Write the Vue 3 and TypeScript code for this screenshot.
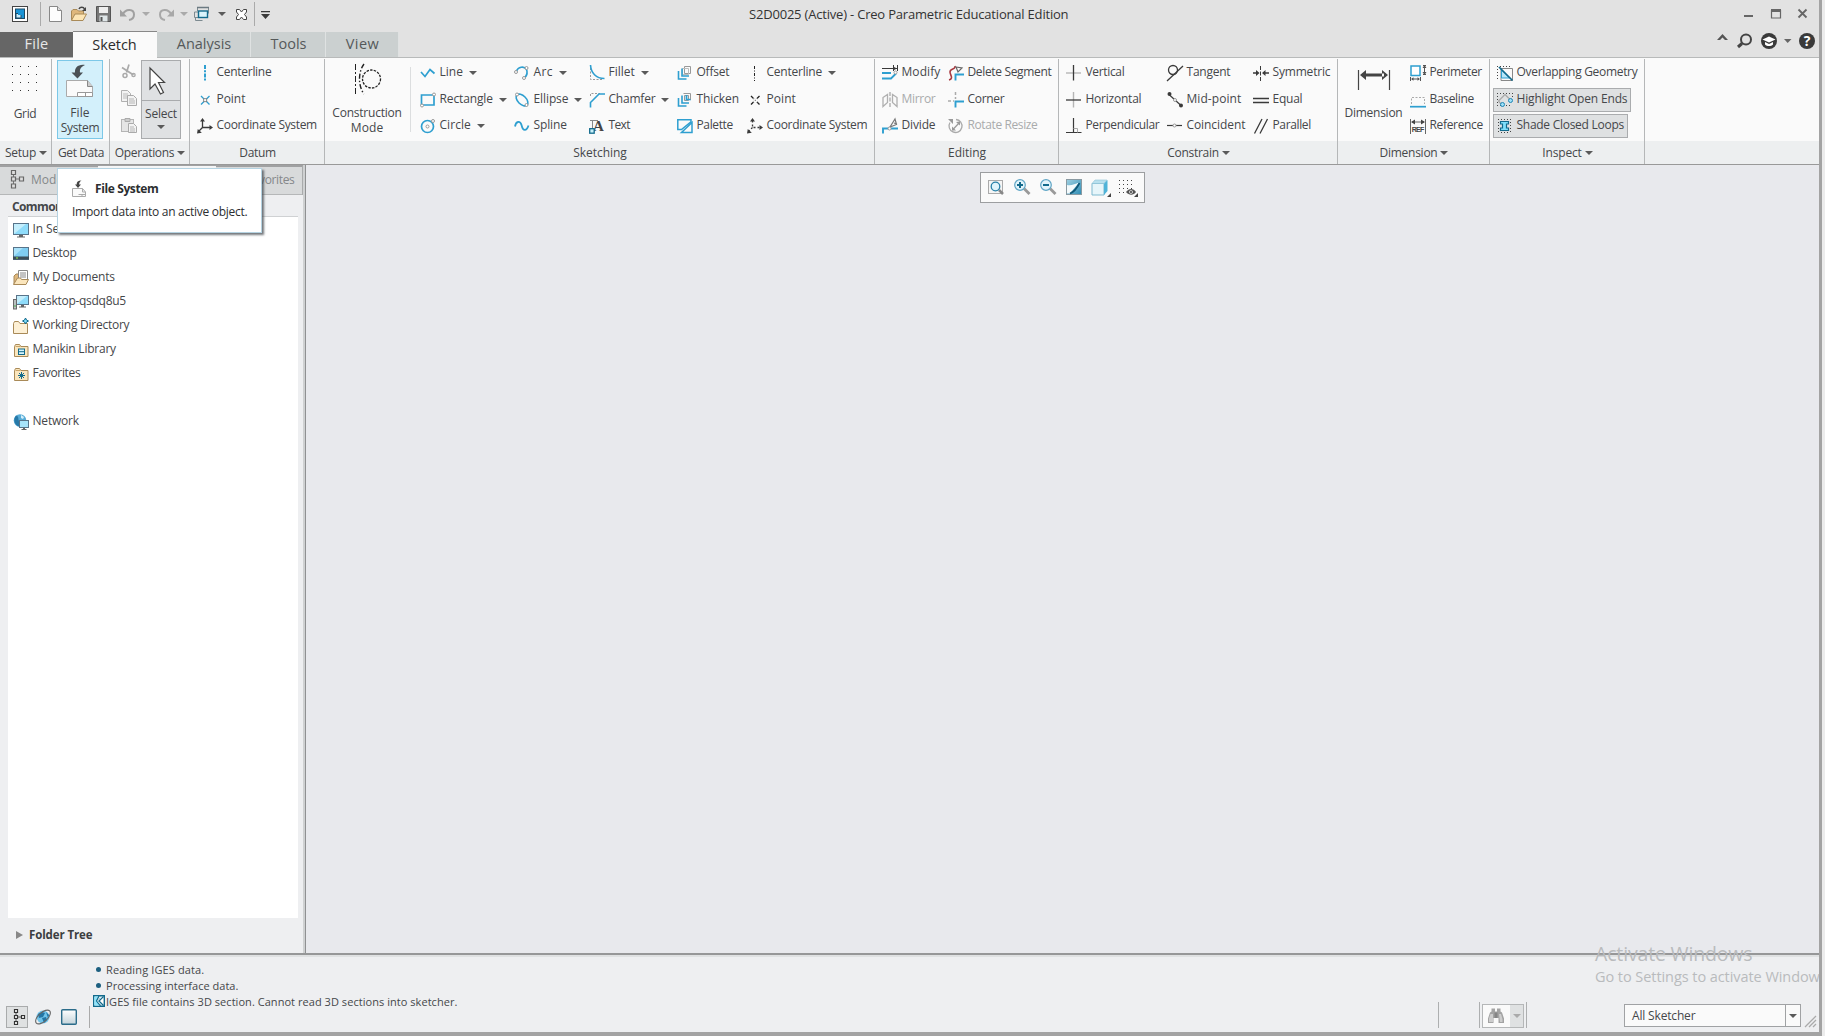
<script setup lang="ts">
interface Cmd {
  icon: string
  label: string
  w: number
  arrow?: boolean
  off?: boolean
  on?: boolean
}
interface Col { width: number; items: Cmd[] }
interface Group { name: string; w: number; width: number; arrow?: boolean; pad?: number; big?: string; cols?: Col[] }

// Spreads the letters of a label so that it fills the given width.
const vFit = {
  mounted(el: HTMLElement, binding: { value: number }) {
    const n = (el.textContent ?? '').length
    const natural = el.getBoundingClientRect().width
    if (n > 0) el.style.letterSpacing = ((binding.value + 1.4 - natural) / n).toFixed(3) + 'px'
  },
}

const c = (icon: string, label: string, w: number, extra: Partial<Cmd> = {}): Cmd => ({ icon, label, w, ...extra })

const tabs = [
  { label: 'File', w: 22.5, width: 73, cls: 'file' },
  { label: 'Sketch', w: 43, width: 84, cls: 'active' },
  { label: 'Analysis', w: 53, width: 94, cls: '' },
  { label: 'Tools', w: 34.5, width: 75, cls: '' },
  { label: 'View', w: 32, width: 73, cls: '' },
]

const groups: Group[] = [
  { name: 'Setup', w: 29.5, width: 52, arrow: true, big: 'grid' },
  { name: 'Get Data', w: 44.5, width: 58, big: 'filesystem' },
  { name: 'Operations', w: 58, width: 80, arrow: true, big: 'ops' },
  {
    name: 'Datum', w: 35, width: 135, pad: 7,
    cols: [{ width: 127, items: [c('clBlue', 'Centerline', 53.5), c('ptBlue', 'Point', 27.5), c('csys', 'Coordinate System', 99)] }],
  },
  {
    name: 'Sketching', w: 52, width: 550, big: 'construction',
    cols: [
      { width: 94, items: [c('line', 'Line', 22, { arrow: true }), c('rect', 'Rectangle', 52, { arrow: true }), c('circle', 'Circle', 30, { arrow: true })] },
      { width: 75, items: [c('arc', 'Arc', 18, { arrow: true }), c('ellipse', 'Ellipse', 33.5, { arrow: true }), c('spline', 'Spline', 32)] },
      { width: 88, items: [c('fillet', 'Fillet', 25, { arrow: true }), c('chamfer', 'Chamfer', 45.5, { arrow: true }), c('text', 'Text', 20)] },
      { width: 70, items: [c('offset', 'Offset', 31.5), c('thicken', 'Thicken', 41), c('palette', 'Palette', 35)] },
      { width: 126, items: [c('clBlack', 'Centerline', 54, { arrow: true }), c('ptBlack', 'Point', 28), c('csysDash', 'Coordinate System', 99.5)] },
    ],
  },
  {
    name: 'Editing', w: 36.5, width: 184, pad: 7,
    cols: [
      { width: 66, items: [c('modify', 'Modify', 37.5), c('mirror', 'Mirror', 32.5, { off: true }), c('divide', 'Divide', 32.5)] },
      { width: 110, items: [c('delseg', 'Delete Segment', 82.5), c('corner', 'Corner', 35.5), c('rotate', 'Rotate Resize', 68.5, { off: true })] },
    ],
  },
  {
    name: 'Constrain', w: 50, width: 279, arrow: true, pad: 7,
    cols: [
      { width: 101, items: [c('vertical', 'Vertical', 37.5), c('horizontal', 'Horizontal', 54.5), c('perp', 'Perpendicular', 72.5)] },
      { width: 86, items: [c('tangent', 'Tangent', 42.5), c('midpoint', 'Mid-point', 53.5), c('coincident', 'Coincident', 57.5)] },
      { width: 84, items: [c('symmetric', 'Symmetric', 56.5), c('equal', 'Equal', 28.5), c('parallel', 'Parallel', 37)] },
    ],
  },
  {
    name: 'Dimension', w: 56.5, width: 152, arrow: true, big: 'dimension',
    cols: [{ width: 79, items: [c('perimeter', 'Perimeter', 51), c('baseline', 'Baseline', 43), c('reference', 'Reference', 52)] }],
  },
  {
    name: 'Inspect', w: 38, width: 155, arrow: true, pad: 7,
    cols: [{ width: 147, items: [c('overlap', 'Overlapping Geometry', 119.5), c('openends', 'Highlight Open Ends', 109.5, { on: true }), c('loops', 'Shade Closed Loops', 106, { on: true })] }],
  },
]

const folders = [
  { icon: 'monitor', label: 'In Session', w: 54 },
  { icon: 'desktop', label: 'Desktop', w: 42.5 },
  { icon: 'docs', label: 'My Documents', w: 81 },
  { icon: 'pc', label: 'desktop-qsdq8u5', w: 92 },
  { icon: 'workdir', label: 'Working Directory', w: 95.5 },
  { icon: 'manikin', label: 'Manikin Library', w: 82 },
  { icon: 'fav', label: 'Favorites', w: 46.5 },
  { icon: '', label: '', w: 0 },
  { icon: 'network', label: 'Network', w: 45 },
]

function dots(x0: number, y0: number, cols: number, rows: number, step: number, size = 1, fill = '#444'): string {
  let out = ''
  for (let r = 0; r < rows; r++)
    for (let k = 0; k < cols; k++) out += `<rect x="${x0 + k * step}" y="${y0 + r * step}" width="${size}" height="${size}" fill="${fill}"/>`
  return out
}

const B = '#2e9fd0'
const K = '#3a3a3a'
const s = (d: string, color: string, w = 1, extra = '') => `<path d="${d}" fill="none" stroke="${color}" stroke-width="${w}" ${extra}/>`
const node = (x: number, y: number, color = '#999') => `<circle cx="${x}" cy="${y}" r="1.5" fill="#fff" stroke="${color}" stroke-width="1"/>`
const fold = '<path d="M1.5 14.5V4.5l1-2h4l1.500 2h7v10z" fill="#fbe6bd" stroke="#a98a58"/><path d="M2.500 4.500h5" stroke="#c9a56a"/>'
const csysBody = (dash: string) => s('M5.500 2.500V9.500H13.500M5.500 9.500L1.500 13.500', K, 1.3, dash) +
  `<path d="M5.500 0L8 3.500H3z M16 9.500L12.500 7V12z M0 15.500L.8 11L4.800 14.800z" fill="${K}"/>`
const frameDots = dots(0, 1, 5, 1, 3) + dots(0, 4, 1, 4, 3)

const icons: Record<string, string> = {
  clBlue: s('M8 0V16', B, 2, 'stroke-dasharray="4 1.200 2 1.200"'),
  clBlack: s('M7.500 1V16', '#222', 1, 'stroke-dasharray="3 1.500 1 1.500"'),
  ptBlue: s('M4 4l8.500 8.500M12.500 4L4 12.500', B, 1.3) + '<rect x="6.700" y="6.700" width="3" height="3" fill="#fafafa" stroke="#777" stroke-width=".8"/>',
  ptBlack: s('M4 4l8.500 8.500M12.500 4L4 12.500', '#222', 1.3) + '<rect x="6.300" y="6.300" width="4" height="4" fill="#fafafa"/><rect x="7.800" y="7.800" width="1" height="1" fill="#555"/>',
  csys: csysBody(''),
  csysDash: csysBody('stroke-dasharray="2 2"'),
  line: s('M1 7l4 4.500L10 4.500l4.500 4', B, 1.7),
  rect: s('M1.500 3h12.500v10H1.500z', B, 1.7) + node(14, 2.500) + node(2, 13.500),
  circle: `<circle cx="7.500" cy="8.500" r="6" fill="none" stroke="${B}" stroke-width="1.700"/>` + node(7.5, 8.5) + node(13, 3),
  arc: s('M2.500 6C4 2 10 .500 12.500 4.500C14 8 13 10 11 12.500', B, 1.7) + node(2, 7) + node(10, 13) + node(12.500, 3),
  ellipse: `<ellipse cx="8" cy="8" rx="7.200" ry="4.200" transform="rotate(45 8 8)" fill="none" stroke="${B}" stroke-width="1.600"/>` + node(3, 2.500) + node(12.500, 13),
  spline: s('M1 8.500C2 3 6 2.500 7.500 7C9 13.500 12.500 13.500 14.500 7.500', B, 1.8),
  fillet: s('M1.500 3v11.500h13', '#999', 1, 'stroke-dasharray="2 1.500"') + s('M1.500 0C2 8 7 13.500 15.500 13.500', B, 1.6),
  chamfer: s('M1.500 4V1.500H11', '#999', 1, 'stroke-dasharray="2 1.500"') + s('M1.500 15.500V10.500L10 2h6', B, 1.6),
  text: '<text x="4" y="13" font-family="Liberation Serif" font-weight="bold" font-size="15" fill="#444">A</text>' + s('M1 2.500h8M3.500 2.500v9', '#888') + '<rect x=".7" y="10.700" width="4.500" height="4.500" fill="#c8f0fa" stroke="#126a8c" stroke-width="1.300"/>',
  offset: s('M7.500 1.500h6v7h-6z', '#999') + s('M5.500 3.500h6v6h-6z', '#bbb') + s('M5 3.500v7.500h7M1.500 6v8h8', B, 1.6),
  thicken: '<path d="M7.500 3.500h4v5h-4z" fill="#dff3fb" stroke="#999"/>' + s('M5 3.500v7.500h7M1.500 6v8h8M9.500 3v4.500h4.500', B, 1.6) + s('M6.500 1.500h7v6', '#999', 1),
  palette: s('M.800 1.800h13.200v2L4.500 11.500H.800z', B, 1.5) + s('M15 4.500v10H4.500z', B, 1.5),
  modify: s('M0 3.500h15M11.500 0v6M15.500 0v6', K, 1) + `<path d="M15 3.500l-4-2v4z" fill="${K}"/>` + s('M0 8h9M0 13.500h9l5-5', B, 1.8) + node(13.500, 7.500),
  mirror: s('M1 5.500l4.500-3v8l-4.500 4z M15 5.500l-4.500-3v8l4.500 4z', '#b0b0b0', 1.3) + s('M8 0v16', '#aaa', 1.3, 'stroke-dasharray="4 1.500"'),
  divide: s('M1 15.500V10.500H7M9 10.500h7', B, 1.9) + s('M8 9l5-8 1.500 5.500z M12 5l3 1', '#777', 1.2) + node(7.500, 10.500),
  delseg: s('M1 15C6 13.500 2 10 2 7C2 3 8 5 7 1', '#a93a40', 1.6) + s('M8 2l6 1-4 4z', '#666', 1.2) + s('M7.500 15.500V9.500H16', B, 1.9),
  corner: s('M7.500 0v7M0 9h6', '#aaa', 1.5, 'stroke-dasharray="3 2"') + s('M7.500 15.500V9.500H16', B, 1.9),
  rotate: s('M2 4.500A6.500 6.500 0 1 0 8 1.500', '#aaa', 1.3) + s('M4.500 12L11 5', '#999', 1.2) + '<path d="M0 1h5v5z M12 3.500v4L8 4z M4 8.500v4h4z" fill="#999"/>',
  vertical: s('M0 8h15', '#b5b5b5', 1.4) + s('M7.500 0v15.500', K, 1.3),
  horizontal: s('M7.500 0v15.500', '#b5b5b5', 1.4) + s('M0 8h15', K, 1.3),
  perp: s('M0 14.500h15.500M7.500 0v14.500', K, 1.2) + s('M7.500 10.500h4v4', '#aaa'),
  tangent: s('M0 16L16 1', K, 1.3) + `<circle cx="6" cy="5" r="4.500" fill="none" stroke="${K}" stroke-width="1.300"/>`,
  midpoint: s('M2 2.500l12 11', K, 1.2) + `<circle cx="2.500" cy="2" r="2" fill="${K}"/><circle cx="14" cy="13.500" r="2" fill="${K}"/>` + node(8, 8),
  coincident: s('M0 7.500h15', K, 1.2) + node(7.500, 7.5),
  symmetric: s('M7.500 1v15', K, 1, 'stroke-dasharray="4 1.500"') + s('M0 8h5M10.500 8H16', K, 1.3) + `<path d="M6.500 8L3 5v6z M9 8l3.500-3v6z" fill="${K}"/>`,
  equal: s('M0 6.500h16M0 10.500h16', K, 1.3),
  parallel: s('M1.500 15.500L9 1M7 15.500L14.500 1', K, 1.3),
  perimeter: `<path d="M1 1h9v9.500h-9z" fill="#fff" stroke="${B}" stroke-width="1.500"/>` + s('M13 .500h3M13 9.500h3M14.500 2v6M.500 12v4M10.500 12v4M2 14h7', '#555') + '<path d="M14.500 0l2 3h-4z M14.500 10l2-3h-4z M1 14l2.500-1.700v3.400z M10 14l-2.500-1.700v3.400z" fill="#555"/>',
  baseline: s('M1.500 12V5.500h13V12', '#aaa', 1, 'stroke-dasharray="2 1.500"') + s('M0 14.700h16', B, 1.7),
  reference: s('M.500 1v15M15.500 1v15M2 4h12', '#666') + '<path d="M1 4l4-2.500v5z M15 4l-4-2.500v5z" fill="#444"/><text x="1.700" y="14" textLength="12.500" font-family="Liberation Sans" font-weight="bold" font-size="7" fill="#444">REF</text>',
  overlap: frameDots + s('M4 3.500h11.500V15.500H4z', '#888') + `<path d="M4.500 5v8h8z" fill="#b8e6f8" stroke="${B}"/>` + s('M2 2L15.500 15.500', '#126a8c', 1.7),
  openends: frameDots + dots(3, 13, 4, 1, 3) + dots(15, 1, 1, 2, 3) + s('M4 12L1.500 9L8 2.500L12.500 7', '#aaa', 1.3) + '<circle cx="5.500" cy="12.500" r="2" fill="#9fe0f8" stroke="#1f86b5"/><circle cx="13.500" cy="8.500" r="2" fill="#9fe0f8" stroke="#1f86b5"/>',
  loops: dots(1, 1, 5, 1, 3) + dots(1, 4, 1, 4, 3) + dots(13, 4, 1, 4, 3) + dots(4, 14, 3, 1, 3) + '<path d="M3.500 3.500h8v2.500h-2v4h2v2.500h-8v-2.500h2v-4h-2z" fill="#7fe0fb" stroke="#126a8c" stroke-width="1.200"/>',
  monitor: '<rect x=".500" y="1.500" width="15" height="11" fill="#8fdcfa" stroke="#58748a"/><path d="M1 12V2h12z" fill="#c4eefc"/><path d="M6 13h4v1.500h2v1H4v-1h2z" fill="#666"/>',
  desktop: '<rect x=".500" y="1.500" width="15" height="12" fill="#7fcdf2" stroke="#58748a"/><path d="M1 10V2h9z" fill="#a9e2fa"/><rect y="10.500" width="16" height="3" fill="#3b4d59"/><rect x="3" y="11.300" width="2" height="1.300" fill="#7ec850"/>',
  docs: '<path d="M1 14V6l2-2h4" fill="#dfb77c" stroke="#a98a58"/><path d="M5.500.500h9v10h-9z" fill="#fff" stroke="#888"/><path d="M7 3h6M7 5h6M7 7h6" stroke="#888"/><path d="M.500 14.500l4-6.500h3l1 1.500h7l-2.500 5z" fill="#fbe6bd" stroke="#a98a58"/>',
  pc: '<rect x="3.500" y="1.500" width="12" height="9" fill="#8fdcfa" stroke="#58748a"/><path d="M4 10V2h10z" fill="#c4eefc"/><path d="M8 11h3v1.500h2v1H6v-1h2z" fill="#666"/><rect x=".500" y="5.500" width="3" height="9.500" fill="#b9c0c0" stroke="#6a6a6a"/><rect x="1.500" y="11" width="1" height="2" fill="#4caf50"/>',
  workdir: '<path d="M.500 15.500V5.500l1-2h4l1.500 2h7.500v10z" fill="#fdf0d5" stroke="#a98a58"/><path d="M12.500 0l1 2 2 1-2 1-1 2-1-2-2-1 2-1z" fill="#7fdcfa" stroke="#126a8c"/>',
  manikin: fold + '<rect x="5.500" y="7" width="6" height="5.500" fill="#d5f3fc" stroke="#126a8c"/><path d="M5 9.700h7" stroke="#126a8c"/>',
  fav: fold + '<path d="M8.500 6v7M5 9.500h7M6 7l5 5M11 7l-5 5" stroke="#126a8c"/>',
  network: '<circle cx="7" cy="6.500" r="6.300" fill="#58acd7"/><path d="M3 1.500c4 1 1 5 4 6s2 4-1 5C1 11 0 5 3 1.500z" fill="#2779a8"/><path d="M8 1l3 2-1 2-2-1z" fill="#d5effa"/><rect x="6.500" y="6.500" width="9" height="7" fill="#a7e4fb" stroke="#58748a"/><path d="M10 14h2v1h1.500v1h-5v-1H10z" fill="#666"/>',
  zfit: '<rect x=".500" y="1.500" width="14" height="13" fill="#f5f5f5" stroke="#aaa"/><path d="M11 11l4 4" stroke="#888" stroke-width="2.500"/><circle cx="7.500" cy="7.500" r="4.300" fill="#dff3fb" stroke="#2780a8" stroke-width="1.300"/>',
  zin: '<path d="M10 9.500l5.500 5.500" stroke="#999" stroke-width="2.800"/><circle cx="6" cy="6" r="5.300" fill="#e2f4fb" stroke="#5fa5c5" stroke-width="1.200"/><path d="M3 6h6M6 3v6" stroke="#126a8c" stroke-width="2"/>',
  zout: '<path d="M10 9.500l5.500 5.500" stroke="#999" stroke-width="2.800"/><circle cx="6" cy="6" r="5.300" fill="#e2f4fb" stroke="#5fa5c5" stroke-width="1.200"/><path d="M3 6h6" stroke="#126a8c" stroke-width="2"/>',
  repaint: '<defs><linearGradient id="rp" x2="1" y2="1"><stop stop-color="#9fd0e2"/><stop offset="1" stop-color="#2f8db5"/></linearGradient></defs><rect x=".500" y=".500" width="15" height="15" fill="url(#rp)" stroke="#8a9aa2"/><path d="M1 6C5 7 9 5 13 3.500L4 14.500H1z" fill="#f4fafc"/><path d="M4 14.500C8 13 11 9 13.500 4" fill="none" stroke="#0f5878" stroke-width="1.700"/>',
  cube: '<path d="M0 4.500h12v11.500H0z" fill="#e6f5fa" stroke="#7fb9cf"/><path d="M0 4.500L3 1h12l-3 3.500z" fill="#b8e0ee" stroke="#8fc3d6" stroke-width=".6"/><path d="M12 4.500L15.500 1v11L12 16z" fill="#4fb3d8"/><path d="M19 14v4h-4z" fill="#444"/>',
  gridview: dots(1, 1, 4, 4, 4) + '<path d="M8 13c3-4 7.500-4 10 0-2.500 3.500-7 3.500-10 0z" fill="#555"/><circle cx="13" cy="13" r="1.800" fill="#fff"/><circle cx="13" cy="13" r="1" fill="#333"/><path d="M20 14v4h-4z" fill="#444"/>',
  logo: '<rect x=".500" y=".500" width="15" height="15" fill="#fff" stroke="#444"/><rect x="3.500" y="3" width="9" height="9.500" fill="#1a94d6" stroke="#1c4a66"/><path d="M4 7.500h5V12H4z" fill="#c8ecfb" stroke="#1c4a66"/><rect x="6" y="4" width="6" height="5" fill="#1a94d6"/>',
  newdoc: '<path d="M.500.500h8l4 4v11h-12z" fill="#fdfdfd" stroke="#888"/><path d="M8.500.500v4h4" fill="#ddd" stroke="#888"/>',
  open: '<path d="M.500 14V5L2 3.500h4L7.500 5h5v3" fill="#dfb77c" stroke="#a98a58"/><path d="M.500 14.500L4 8h11.500L12 14.500z" fill="#fde5b5" stroke="#a98a58"/><path d="M8 3c1-2.500 4.500-2.500 5.500 0" fill="none" stroke="#444" stroke-width="1.500"/><path d="M15 1v4h-4z" fill="#444"/>',
  save: '<path d="M.500.500h14v15h-14z" fill="#777" stroke="#555"/><rect x="3" y="1" width="9" height="6" fill="#eee"/><rect x="3.500" y="9.500" width="8" height="6" fill="#dfe6e8"/><rect x="4.500" y="11" width="2" height="4" fill="#555"/>',
  undo: '<path d="M3 8C6 2 14 3 14 8.500c0 3-2 5-5 5.500" fill="none" stroke="#a0a0a0" stroke-width="2"/><path d="M0 3.500v7h7z" fill="#a0a0a0"/>',
  redo: '<path d="M13 8C10 2 2 3 2 8.500c0 3 2 5 5 5.500" fill="none" stroke="#a8a8a8" stroke-width="2"/><path d="M16 3.500v7H9z" fill="#a8a8a8"/>',
  windows: '<path d="M3.500 5V1.500h11V7.500M4 11.500h-3.500V6H5M1.500 11.500v3h7" fill="none" stroke="#7d8a90"/><path d="M3 1.500h12" stroke="#6b7a82" stroke-width="1.500"/><rect x="4.500" y="5" width="9" height="6.500" fill="#d9f3fb" stroke="#126a8c" stroke-width="1.400"/>',
  closewin: '<path d="M1.500 1.500h3L6.500 4l2-2.500h3V4L9.500 6.500 11.500 9v2.500h-3l-2-2.500-2 2.500h-3V9L3.500 6.500 1.500 4z" fill="#fff" stroke="#444" transform="translate(0 1)"/>',
  custom: '<path d="M0 5h9v1.300H0z M0 8h9l-4.500 5z" fill="#3a3a3a"/>',
  tree: '<path d="M3.500 4v10M3.500 9h7" stroke="#777" fill="none"/><path d="M1.500.500h4v4h-4z M1.500 7h4v4h-4z M1.500 14h4v4h-4z M9.500 7h4v4h-4z" fill="#ddd" stroke="#666" stroke-width="1.200"/>',
  treeSmall: '<path d="M5 3v10M5 8h7" stroke="#555" fill="none"/><path d="M3.500.500h3v3h-3z M3.500 6.500h3v3h-3z M3.500 12.500h3v3h-3z M10.500 6.500h3v3h-3z" fill="#f2f2f2" stroke="#333" stroke-width="1.200"/>',
  globe: '<circle cx="8" cy="8" r="6.500" fill="#6fc3ea"/><path d="M3 5l4-2 3 1-2 4-4 1zM7 9l4-1 1 3-3 3zM11 3l3 3-1 3z" fill="#2376a5"/><ellipse cx="8" cy="8" rx="9" ry="4.500" transform="rotate(-42 8 8)" fill="none" stroke="#666" stroke-width="1.100"/>',
  square: '<defs><linearGradient id="sq" x2="0" y2="1"><stop stop-color="#fff"/><stop offset="1" stop-color="#c3d3da"/></linearGradient></defs><rect x=".700" y=".700" width="14.600" height="14.600" rx="1" fill="url(#sq)" stroke="#2b6c8a" stroke-width="1.400"/>',
  binoc: '<path d="M3.500.500h3.500v3h2v-3h3.500v3l1.500 1 2 6v4.500h-5.500v-5h-5v5H0v-4.500l2-6 1.500-1z" fill="#a3a3a3"/><path d="M6.500 4.500h3V10h-3z" fill="#858585"/><path d="M2.500 6h2.500v8H1v-3.500z M11 6h2l1.500 5v3H12z" fill="#cdcdcd"/>',
  scissors: s('M8 1.500L5.500 9.500M1 4.500L12.500 12', '#aaa', 1.7) + '<circle cx="4" cy="12.500" r="2" fill="none" stroke="#aaa" stroke-width="1.500"/><circle cx="12.500" cy="12" r="1.600" fill="none" stroke="#aaa" stroke-width="1.400"/>',
  copy: '<path d="M.500.500h6l3 3v8h-9z" fill="#f3f3f3" stroke="#b0b0b0"/><path d="M2 4h5M2 6h5M2 8h5" stroke="#bbb"/><path d="M6.500 5.500h6l3 3v7h-9z" fill="#f3f3f3" stroke="#aaa"/><path d="M8 9h5M8 11h6M8 13h6" stroke="#b5b5b5"/>',
  paste: '<rect x=".500" y="2.500" width="12" height="12" fill="#e5e5e5" stroke="#b5b5b5"/><path d="M4 1.500h5v3H4z" fill="#ccc" stroke="#aaa"/><path d="M7.500 6.500h5l3 3v6h-8z" fill="#f3f3f3" stroke="#aaa"/><path d="M9 10h4M9 12h5M9 14h5" stroke="#b5b5b5"/>',
  msg: '<path d="M.700.700h10.600v10.600H.700z" fill="#fff" stroke="#126a8c" stroke-width="1.400"/><path d="M1.400 1.400H6L3.500 6 7 10.600H1.400z" fill="#8fe4fb"/><path d="M6 1L3.500 6l4 5M10.500 1.500L6 6l4.500 4.500" fill="none" stroke="#126a8c" stroke-width="1.200"/><path d="M8 1L5 6l4 5" fill="none" stroke="#5aa5c0" stroke-dasharray="1 1"/>',
}
icons.gridBig = dots(0, 0, 4, 4, 8, 1, '#333')
icons.importBig = '<path d="M.500 16.500h21l5 6v10H.500z" fill="#fafafa" stroke="#aaa"/><path d="M21.500 16.500v6h5" fill="#ccc" stroke="#888"/><path d="M11.500 28.500h15v4h-15zM19.500 28.500v4" fill="#fff" stroke="#999"/><path d="M19 1C12 0 8.500 4 9 8.500H5.500L11.500 14.500L17 8.500H14C13.500 5 15 3 19 1z" fill="#4a5156"/>'
icons.importSmall = '<path d="M.500 8.500h10l3 3.500v4.500h-13z" fill="#fafafa" stroke="#aaa"/><path d="M10.500 8.500v3.500h3M6.500 14.500h7M10 14.500v2" fill="none" stroke="#aaa"/><path d="M9.500.500C6 .500 4.500 2 4.700 4.500H3l3 3.500 3-3.500H7.200C7 3 8 1.500 9.500.500z" fill="#444"/>'
icons.cursor = '<path d="M1 1v21l5-5 5.500 10 3-1.500L9.500 15.500h6z" fill="#fff" stroke="#444" stroke-width="1.200"/>'
icons.constructBig = '<path d="M1.500 0v30" stroke="#222" stroke-dasharray="6 2 2 2"/><path d="M10 0C4 8 4 22 10 30" fill="none" stroke="#222" stroke-width="1.400" stroke-dasharray="5 2 1.500 2"/><circle cx="17.500" cy="15" r="9" fill="none" stroke="#222" stroke-width="1.300" stroke-dasharray="2.500 1.200"/>'
icons.dimBig = '<path d="M.500 0v20M31.500 0v20" stroke="#444" stroke-width="1.200"/><path d="M6 3.500h20v3H6z M2 5L8 0v10z M30 5L24 0v10z" fill="#444"/>'
</script>

<template>
  <div class="screen">
    <div class="window">
      <header class="titlebar">
        <div class="quick">
          <svg class="i16 first" v-html="icons.logo" />
          <i class="sep" />
          <svg class="i16 a" v-html="icons.newdoc" />
          <svg class="i17" v-html="icons.open" />
          <svg class="i16 b" v-html="icons.save" />
          <svg class="i16 b" v-html="icons.undo" />
          <i class="arrow dim c" />
          <svg class="i16 b" v-html="icons.redo" />
          <i class="arrow dim d" />
          <svg class="i16 e" v-html="icons.windows" />
          <i class="arrow f" />
          <svg class="i14" v-html="icons.closewin" />
          <i class="sep g" />
          <svg class="i10" v-html="icons.custom" />
        </div>
        <span v-fit="318" class="title">S2D0025 (Active) - Creo Parametric Educational Edition</span>
        <svg class="wincontrols" width="64" height="12" viewBox="0 0 64 12">
          <path d="M0 7h9" stroke="#666" stroke-width="2" />
          <path d="M27.500 1.500h9v7.500h-9z M27 2.500h10" fill="none" stroke="#666" stroke-width="1.200" />
          <path d="M27 0h10v3H27z" fill="#666" />
          <path d="M54.500 .5l8 8M62.500 .5l-8 8" stroke="#666" stroke-width="1.800" />
        </svg>
      </header>

      <nav class="tabs">
        <div v-for="t in tabs" :key="t.label" class="tab" :class="t.cls" :style="{ width: t.width + 'px' }">
          <span v-fit="t.w">{{ t.label }}</span>
        </div>
        <svg class="help" width="99" height="18" viewBox="0 0 99 18">
          <path d="M0 8L5.500 2 11 8H8L5.500 5.500 3 8z" fill="#555" />
          <circle cx="29" cy="7.500" r="5" fill="none" stroke="#444" stroke-width="2" />
          <path d="M25 11.500l-4 3.500" stroke="#444" stroke-width="3" />
          <circle cx="52" cy="9" r="8" fill="#3a3a3a" />
          <path d="M45.500 7.500L52 4.500l6.500 3L52 10.500z M48 10v2.500c2 2 6 2 8 0V10l-4 2z" fill="#fff" />
          <path d="M67 7h7.500L70.700 11z" fill="#666" />
          <circle cx="90" cy="9" r="8" fill="#3a3a3a" />
          <text x="90" y="14" text-anchor="middle" font-family="Open Sans, sans-serif" font-weight="bold" font-size="14" fill="#fff">?</text>
        </svg>
      </nav>

      <section class="ribbon">
        <div v-for="g in groups" :key="g.name" class="group" :style="{ width: g.width + 'px' }">
          <div class="body" :style="{ paddingLeft: (g.pad ?? 0) + 'px' }">
            <div v-if="g.big === 'grid'" class="big gridbtn">
              <svg width="26" height="26" v-html="icons.gridBig" />
              <span v-fit="21">Grid</span>
            </div>
            <div v-else-if="g.big === 'filesystem'" class="big fsbtn">
              <svg width="28" height="33" v-html="icons.importBig" />
              <span v-fit="18">File</span>
              <span v-fit="37">System</span>
            </div>
            <template v-else-if="g.big === 'ops'">
              <div class="clip">
                <svg class="i16" v-html="icons.scissors" />
                <svg class="i16" v-html="icons.copy" />
                <svg class="i16" v-html="icons.paste" />
              </div>
              <div class="select">
                <div class="sel-top"><svg width="17" height="29" v-html="icons.cursor" /></div>
                <span v-fit="30.5">Select</span>
                <i class="arrow" />
              </div>
            </template>
            <div v-else-if="g.big === 'construction'" class="big cons">
              <svg width="28" height="31" v-html="icons.constructBig" />
              <span v-fit="68">Construction</span>
              <span v-fit="31">Mode</span>
            </div>
            <div v-else-if="g.big === 'dimension'" class="big dimn">
              <svg width="32" height="21" v-html="icons.dimBig" />
              <span v-fit="56.5">Dimension</span>
            </div>
            <i v-if="g.big === 'construction'" class="inner" />

            <div v-for="(col, i) in g.cols" :key="i" class="col" :style="{ width: col.width + 'px' }">
              <div v-for="it in col.items" :key="it.label" class="cmd" :class="{ off: it.off, on: it.on }">
                <svg class="i16" v-html="icons[it.icon]" />
                <span v-fit="it.w">{{ it.label }}</span>
                <i v-if="it.arrow" class="arrow" />
              </div>
            </div>
          </div>
          <div class="caption">
            <span v-fit="g.w">{{ g.name }}</span>
            <i v-if="g.arrow" class="arrow" />
          </div>
        </div>
      </section>

      <main class="work">
        <aside class="panel">
          <div class="ptabs">
            <div class="ptab mt"><svg width="15" height="19" v-html="icons.tree" /><span v-fit="62">Model Tree</span></div>
            <div class="ptab mid" />
            <div class="ptab last"><span v-fit="46">Favorites</span></div>
          </div>
          <div class="phead"><span v-fit="91">Common Folders</span></div>
          <div class="list">
            <div v-for="(f, i) in folders" :key="i" class="row">
              <svg v-if="f.icon" class="i16" v-html="icons[f.icon]" />
              <span v-if="f.label" v-fit="f.w">{{ f.label }}</span>
            </div>
          </div>
          <div class="ftree"><i /><span v-fit="62">Folder Tree</span></div>
        </aside>
        <div class="canvas">
          <div class="viewbar">
            <svg class="i16" v-html="icons.zfit" />
            <svg class="i16" v-html="icons.zin" />
            <svg class="i16" v-html="icons.zout" />
            <svg class="i16" v-html="icons.repaint" />
            <svg class="i16" v-html="icons.cube" />
            <svg class="i16" v-html="icons.gridview" />
          </div>
        </div>
        <div class="tooltip">
          <div class="tiphead">
            <svg width="15" height="17" v-html="icons.importSmall" />
            <b v-fit="62">File System</b>
          </div>
          <span v-fit="174">Import data into an active object.</span>
        </div>
      </main>

      <footer class="status">
        <div class="nav">
          <div class="navbtn"><svg class="i16" v-html="icons.treeSmall" /></div>
          <svg class="i16" v-html="icons.globe" />
          <svg class="i16" v-html="icons.square" />
        </div>
        <div class="msgs">
          <div><i /><span v-fit="97">Reading IGES data.</span></div>
          <div><i /><span v-fit="131">Processing interface data.</span></div>
          <div><svg width="12" height="12" v-html="icons.msg" /><span v-fit="350">IGES file contains 3D section. Cannot read 3D sections into sketcher.</span></div>
        </div>
        <div class="tools">
          <i class="vsep" />
          <i class="vsep v2" />
          <div class="find">
            <div class="bin"><svg class="i16" v-html="icons.binoc" /></div>
            <div class="drop"><i class="arrow dim" /></div>
          </div>
          <i class="vsep v3" />
          <div class="combo"><span v-fit="62">All Sketcher</span><b><i class="arrow" /></b></div>
          <svg class="grip" width="13" height="13"><path d="M1 12L12 1M5 12L12 5M9 12l3-3" stroke="#aaa" stroke-width="1.300" /></svg>
        </div>
      </footer>
      <div class="watermark">
        <div class="w1"><span v-fit="156">Activate Windows</span></div>
        <div class="w2"><span v-fit="234">Go to Settings to activate Windows.</span></div>
      </div>
    </div>
  </div>
</template>

<style>
body { margin: 0; overflow: hidden; }
</style>

<style scoped>
.screen {
  width: 1825px; height: 1036px; background: #ececec; overflow: hidden;
  font-family: "Open Sans", "Noto Sans", sans-serif; font-size: 12px; line-height: 15px; color: #45474a;
}
.screen * { box-sizing: border-box; }
.window {
  position: relative; display: flex; flex-direction: column; width: 1822px; height: 1036px; overflow: hidden;
  border-right: 3px solid #a3a3a3; border-bottom: 4px solid #a3a3a3; background: #eeeff1;
}
svg { display: block; flex: none; overflow: visible; }
span, b { display: inline-block; white-space: nowrap; flex: none; }
.i16 { width: 16px; height: 16px; }
.arrow { flex: none; width: 0; height: 0; border: 4px solid transparent; border-bottom: 0; border-top: 4px solid #5a5a5a; }
.arrow.dim { border-top-color: #aaa; }

.titlebar { display: flex; align-items: flex-start; height: 31px; background: #e2e2e2; flex: none; }
.quick { display: flex; align-items: center; width: 749px; height: 28px; }
.first { margin-left: 12px; }
.sep { width: 1px; height: 24px; background: #aaa; margin-left: 12px; }
.a { margin-left: 8px; width: 15px; }
.i17 { width: 17px; height: 16px; margin-left: 7px; }
.b { margin-left: 8px; }
.c { margin-left: 6px; }
.d { margin-left: 6px; }
.e { margin-left: 6px; }
.f { margin-left: 8px; }
.i14 { width: 14px; height: 14px; margin-left: 9px; }
.g { margin-left: 5px; }
.i10 { width: 10px; height: 16px; margin-left: 6px; }
.title { font-size: 13px; line-height: 18px; margin-top: 5px; color: #333; }
.wincontrols { margin-left: auto; margin-right: 11px; margin-top: 9px; }

.tabs { display: flex; height: 27px; background: #e2e2e2; border-bottom: 1px solid #b8baba; flex: none; }
.tab {
  display: flex; justify-content: center; height: 25px; margin-top: 1px; padding-left: 1px; background: #cbd0d0; color: #55595a;
  font-size: 14.5px; line-height: 24px; border-right: 1px solid #dfe2e2;
}
.tab.file { background: #666; color: #e8e8e8; border: 0; padding-left: 0; }
.tab.active { background: #fafafa; color: #2c2c2c; height: 27px; margin-top: 0; padding: 0 1px 0 0; border: 0; border-top: 1px solid #888; line-height: 25px; }
.help { margin-left: auto; margin-right: 3px; margin-top: 1px; }

.ribbon { display: flex; height: 107px; background: linear-gradient(#fafafa 0 83px, #edeff0 83px); border-bottom: 1px solid #999; flex: none; }
.group { display: flex; flex-direction: column; border-right: 1px solid #b5b7b8; flex: none; margin-top: 1px; }
.body { display: flex; height: 82px; }
.caption { display: flex; align-items: center; justify-content: center; gap: 3px; height: 23px; padding: 0 0 1px 1px; }
.caption .arrow { margin-top: 1px; }
.col { flex: none; padding-top: 1px; }
.cmd { display: flex; align-items: center; height: 26px; }
.cmd:first-child { margin-bottom: 1px; }
.cmd span { margin: -2px 0 0 3.5px; line-height: 16px; }
.cmd .arrow { margin: -1px 0 0 6px; }
.cmd.off { color: #a9abac; }
.cmd.on { width: max-content; height: 24px; margin: 2px 0 1px -4px; padding: 0 3px; border: 1px solid #aaacae; background: #dfe1e2; }

.big { display: flex; flex-direction: column; align-items: center; flex: none; }
.gridbtn { width: 50px; padding-top: 7px; }
.gridbtn span { margin-top: 14px; }
.fsbtn { width: 46px; height: 79px; margin: 1px 0 0 5px; padding-top: 3px; background: #d3f0fb; border: 1px solid #7cc8e8; }
.fsbtn span { margin-top: 8px; }
.fsbtn span + span { margin-top: 0; }
.clip { display: flex; flex-direction: column; gap: 11px; width: 31px; padding: 4px 0 0 11px; }
.select { display: flex; flex-direction: column; align-items: center; width: 40px; height: 79px; margin-top: 1px; border: 1px solid #a9abad; background: #dfe1e3; }
.sel-top { width: 100%; height: 40px; padding: 6px 0 0 7px; border-bottom: 1px solid #a9abad; }
.select span { margin-top: 5px; }
.select .arrow { margin-top: 4px; }
.cons { width: 85px; padding-top: 5px; }
.cons span { margin-top: 10px; margin-left: -1px; }
.cons span + span { margin-top: 0; }
.inner { width: 1px; height: 65px; margin: 8px 9px 0 0; background: #dcdedf; }
.dimn { width: 72px; padding: 11px 1px 0 0; }
.dimn span { margin-top: 14px; }

.work { position: relative; display: flex; height: 788px; flex: none; }
.panel { display: flex; flex-direction: column; width: 306px; border-right: 1px solid #8f9192; box-shadow: inset -2px 0 #cfd1d2; background: #eeeff1; }
.ptabs { display: flex; width: 303px; height: 30px; border-top: 2px solid #a0a1a2; border-right: 1px solid #a9abac; background: #d8dadb; }
.ptab { display: flex; align-items: center; padding-bottom: 2px; color: #85888a; border-bottom: 1px solid #b5b7b8; }
.mt { width: 98px; padding-left: 10px; }
.mt span { margin-left: 6px; }
.mid { width: 118px; margin-top: -1px; background: #f5f6f7; border-bottom: 0; }
.last { flex: 1; padding-left: 31px; }
.phead { height: 21px; padding: 4px 0 0 12px; font-weight: bold; font-size: 12px; }
.list { width: 290px; height: 702px; margin-left: 8px; padding: 1px 0 0 5px; border-top: 1px solid #cfd1d3; background: #fff; flex: none; }
.row { display: flex; align-items: center; height: 24px; }
.row svg { margin-top: -1px; }
.row span { margin: -3px 0 0 3.5px; }
.ftree { display: flex; align-items: center; height: 35px; padding: 0 0 2px 16px; font-weight: bold; font-size: 11.5px; color: #3c3e40; }
.ftree i { border: 4.500px solid transparent; border-left: 7px solid #888; border-right: 0; }
.ftree span { margin-left: 6px; }
.canvas { flex: 1; padding: 7px 0 0 674px; background: #e8e9ed; }
.viewbar { display: flex; gap: 10px; width: 165px; height: 31px; padding: 6px 7px; border: 1px solid #9c9ea0; background: #fafafa; }
.tooltip {
  position: absolute; left: 57px; top: 3px; width: 205px; height: 65px; padding: 11px 0 0 14px;
  background: #fff; border: 1px solid #b5d3e2; box-shadow: 2px 2px 2px rgba(70, 75, 80, .75); color: #2c2e30;
}
.tiphead { display: flex; align-items: center; height: 17px; margin-bottom: 7px; }
.tiphead b { margin-left: 8px; font-size: 12px; }

.status { display: flex; flex: none; height: 79px; border-top: 2px solid #969798; background: linear-gradient(#dfe1e2 0 2px, #eeeff1 2px); }
.nav { display: flex; align-items: center; align-self: flex-end; gap: 10px; width: 90px; height: 22px; margin-bottom: 4px; padding-left: 6px; border-right: 1px solid #aaa; }
.navbtn { display: flex; align-items: center; justify-content: center; width: 22px; height: 22px; margin-right: -3px; padding-left: 3px; border: 1px solid #a9abac; background: #dfe1e2; }
.msgs { padding: 6px 0 0 3px; font-size: 11px; }
.msgs div { display: flex; align-items: center; height: 16px; }
.msgs i { width: 5px; height: 5px; margin: 0 5px 0 3px; border-radius: 50%; background: #1c5f80; }
.msgs svg { margin-right: 1px; }
.tools { display: flex; align-items: flex-end; height: 73px; margin-left: auto; margin-right: 2px; }
.vsep { width: 1px; height: 26px; background: #adafb0; }
.v2 { margin: 0 2px 0 40px; }
.v3 { margin-left: 2px; }
.find { display: flex; width: 42px; height: 24px; border: 1px solid #b5b7b8; }
.bin { width: 27px; padding: 3px 5px; background: #fafafa; }
.drop { display: flex; align-items: center; justify-content: center; flex: 1; background: #dfe1e2; }
.combo { display: flex; align-items: center; width: 177px; height: 23px; margin: 0 3px 1px 97px; padding-left: 7px; border: 1px solid #a0a2a4; background: #fafafa; }
.combo b { display: flex; align-items: center; justify-content: center; width: 15px; height: 21px; margin-left: auto; border-left: 1px solid #a0a2a4; }
.watermark { position: absolute; left: 1595px; top: 940px; color: #b9bbbd; white-space: nowrap; }
.w1 { font-size: 19.500px; line-height: 28px; }
.w2 { font-size: 14.500px; line-height: 20px; margin-top: -1px; }
</style>
